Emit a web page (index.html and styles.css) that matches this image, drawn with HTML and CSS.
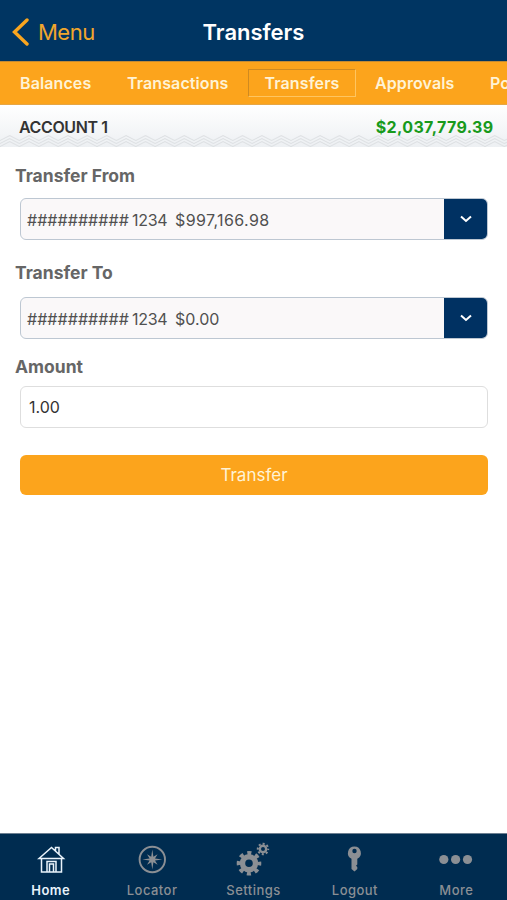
FILE: index.html
```html
<!DOCTYPE html>
<html lang="en">
<head>
<meta charset="utf-8">
<title>Transfers</title>
<link rel="stylesheet" href="styles.css">
</head>
<body>
<div class="app">
  <header class="topbar">
    <a class="back">
      <svg width="18" height="28" viewBox="0 0 18 28"><path d="M16 2 3.500 14 16 26" fill="none" stroke="#f9a51f" stroke-width="3.400" stroke-linecap="round"/></svg>
      <span>Menu</span>
    </a>
    <h1>Transfers</h1>
    <span></span>
  </header>
  <nav class="tabs">
    <a class="tab balances">Balances</a>
    <a class="tab transactions">Transactions</a>
    <a class="tab selected">Transfers</a>
    <a class="tab approvals">Approvals</a>
    <a class="tab">Po</a>
  </nav>
  <section class="account">
    <div class="account-row"><span class="name">ACCOUNT 1</span><span class="balance">$2,037,779.39</span></div>
    <svg class="waves" width="507" height="13">
      <defs><pattern id="zig" width="19.400" height="13" patternUnits="userSpaceOnUse">
        <path d="M-1 6 0 6.500 9.700 1.500 19.400 6.500 21 6M-1 9 0 9.500 9.700 4.500 19.400 9.500 21 9M-1 12 0 12.500 9.700 7.500 19.400 12.500 21 12" fill="none" stroke="#dcdfe2" stroke-width="1"/>
      </pattern></defs>
      <rect width="507" height="13" fill="url(#zig)"/>
    </svg>
  </section>
  <main class="form">
    <label class="from">Transfer From</label>
    <div class="select"><span class="hash">##########</span><span class="num">1234</span><span class="sum wide">$997,166.98</span><i class="drop"><svg width="12" height="8" viewBox="0 0 12 8"><path d="m1 1.500 5 4.500 5-4.500" fill="none" stroke="#fff" stroke-width="2"/></svg></i></div>
    <label class="to">Transfer To</label>
    <div class="select"><span class="hash">##########</span><span class="num">1234</span><span class="sum">$0.00</span><i class="drop"><svg width="12" height="8" viewBox="0 0 12 8"><path d="m1 1.500 5 4.500 5-4.500" fill="none" stroke="#fff" stroke-width="2"/></svg></i></div>
    <label class="amount">Amount</label>
    <div class="input">1.00</div>
    <button class="submit">Transfer</button>
  </main>
  <footer class="bottom">
    <a class="item active">
      <svg width="30" height="30" viewBox="0 0 30 30" fill="none" stroke="currentColor" stroke-width="1.500"><path d="M3 14.500 15.500 3.500l12 11zM5.500 14.500V28h20V14.500M11 28V17.500h9V28M13.500 28v-8h4V28M19.500 7V3.500H23V10"/></svg>
      <span>Home</span>
    </a>
    <a class="item">
      <svg width="30" height="30" viewBox="0 0 30 30"><circle cx="15.300" cy="15.500" r="12.700" fill="none" stroke="currentColor" stroke-width="1.900"/><path fill="currentColor" d="m15.300 5.500 1.100 7.300 4.200-2.600-2.600 4.200 7.300 1.100-7.300 1.100 2.600 4.200-4.200-2.600-1.100 7.300-1.100-7.300-4.200 2.600 2.600-4.200-7.300-1.100 7.300-1.100-2.600-4.200 4.200 2.600z"/></svg>
      <span>Locator</span>
    </a>
    <a class="item">
      <svg width="36" height="34" viewBox="0 0 36 34" fill="none" stroke="currentColor"><circle cx="14" cy="21.300" r="6.500" stroke-width="5.400"/><circle cx="14" cy="21.300" r="10.300" stroke-width="4" stroke-dasharray="4.045 4.045" stroke-dashoffset="2.022"/><circle cx="28" cy="7" r="3.200" stroke-width="2.400"/><circle cx="28" cy="7" r="5.200" stroke-width="2" stroke-dasharray="2.042 2.042" stroke-dashoffset="1.021"/></svg>
      <span>Settings</span>
    </a>
    <a class="item">
      <svg width="30" height="30" viewBox="0 0 30 30"><path fill="currentColor" fill-rule="evenodd" d="M14.500 2.500a6.500 6.500 0 0 0-3 12.300V25l3 2.500 2.800-2.500v-2L16 21.700l1.300-1.200v-5.700a6.500 6.500 0 0 0-2.800-12.300m0 2.300a2.200 2.200 0 1 0 0 4.400 2.200 2.200 0 0 0 0-4.400"/></svg>
      <span>Logout</span>
    </a>
    <a class="item">
      <svg width="36" height="30" viewBox="0 0 36 30" fill="currentColor"><circle cx="5.800" cy="15.500" r="4.600"/><circle cx="17.600" cy="15.500" r="4.600"/><circle cx="29.500" cy="15.500" r="4.600"/></svg>
      <span>More</span>
    </a>
  </footer>
</div>
</body>
</html>
```
FILE: styles.css
```css
* { box-sizing: border-box; }
body { margin: 0; background: #fff; font-family: Inter, "Liberation Sans", sans-serif; }
.app { width: 507px; height: 900px; display: flex; flex-direction: column; overflow: hidden; }
.topbar { height: 61px; background: #003562; display: grid; grid-template-columns: 1fr auto 1fr; align-items: center; padding-top: 2px; flex: none; }
.back { display: flex; align-items: center; gap: 9px; padding-left: 11px; color: #f1a62c; font-size: 22px; letter-spacing: -.5px; line-height: 28px; }
h1 { margin: 0; color: #fff; font-size: 22px; font-weight: 600; line-height: 28px; }
.tabs { height: 44px; background: #fca41c; border-top: 1px solid #c18a35; border-bottom: 1px solid #e6a646; display: flex; align-items: center; padding-left: 20px; flex: none; overflow: hidden; }
.tab { flex: none; color: #fff3d5; font-size: 16px; font-weight: 600; letter-spacing: .1px; line-height: 26px; white-space: nowrap; }
.balances { width: 107px; }
.transactions { width: 121px; }
.selected { width: 108px; height: 28px; border: 1px solid #ffc560; border-top-color: #cf8a20; border-left-color: #cf8a20; text-align: center; }
.approvals { width: 134px; padding-left: 19px; }
.account { height: 42px; flex: none; display: flex; flex-direction: column; background: linear-gradient(#fff, #edf0f3); }
.account-row { height: 29px; padding: 8px 14px 0 19px; display: flex; justify-content: space-between; font-size: 16px; line-height: 28px; font-weight: 600; }
.name, .balance { height: 28px; white-space: nowrap; }
.name { color: #333; letter-spacing: -.4px; }
.balance { color: #189a1c; font-weight: 700; letter-spacing: .35px; margin-right: -.5px; }
.form { flex: 1; padding: 0 19px 0 20px; display: flex; flex-direction: column; }
label { color: #666; font-size: 17.500px; font-weight: 700; line-height: 24px; }
.from { margin: 17px 0 10px -5px; }
.to { margin: 21px 0 12px -5px; }
.amount { margin: 16px 0 7px -5px; }
.select { height: 42px; border: 1.500px solid #bdc7d2; border-radius: 6px; background: #faf8f9; display: flex; align-items: center; padding: 1px 0 0 6px; color: #505050; font-size: 16px; overflow: hidden; }
.hash { width: 105px; letter-spacing: .05px; }
.num { width: 43px; letter-spacing: -.3px; }
.wide { letter-spacing: .4px; }
.drop { margin: -1px 0 0 auto; width: 43px; height: 42px; flex: none; background: #003162; display: flex; align-items: center; justify-content: center; }
.input { height: 42px; border: 1.500px solid #dedede; border-radius: 6px; padding-left: 8px; font-size: 16px; line-height: 40px; color: #333; }
.submit { margin: 27px 0 0; padding: 0; height: 40px; border: 0; border-radius: 6px; background: #fca41c; color: #fff3d5; font: 17px Inter, "Liberation Sans", sans-serif; }
.bottom { height: 67px; flex: none; background: #002c50; border-top: 1px solid #6c7f91; display: grid; grid-template-columns: repeat(5, 1fr); }
.item { display: flex; flex-direction: column; align-items: center; color: #8b8f94; font-size: 13px; font-weight: 500; letter-spacing: .45px; line-height: 18px; }
.item svg { height: 34px; margin-top: 8px; }
.item span { margin-top: 5px; }
.active { color: #e9f3fb; font-weight: 600; }
```
